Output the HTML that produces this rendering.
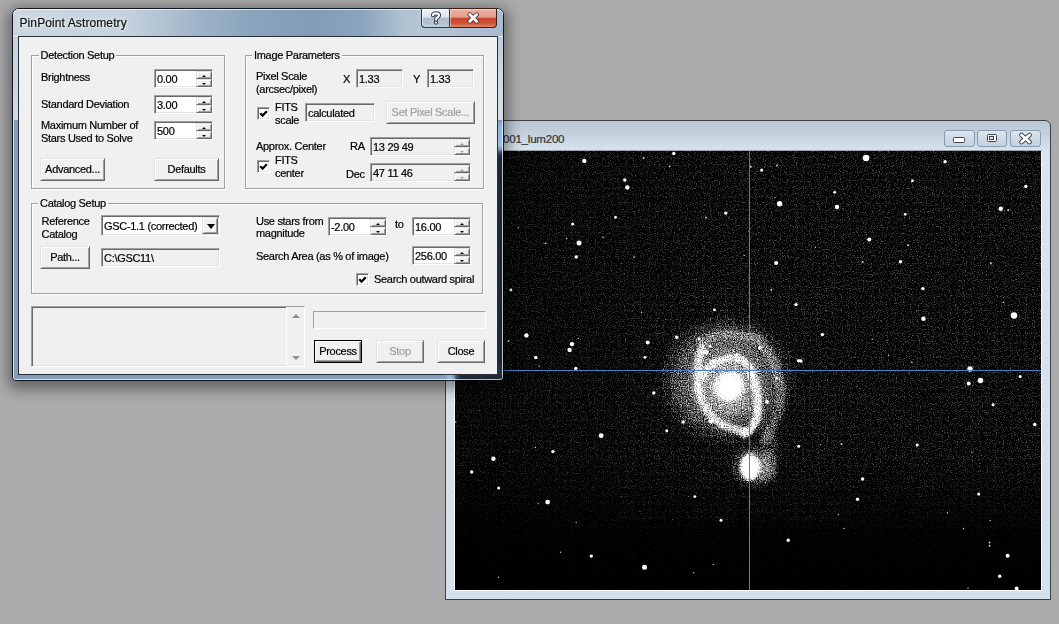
<!DOCTYPE html>
<html><head><meta charset="utf-8"><style>
html,body{margin:0;padding:0}
body{width:1059px;height:624px;position:relative;overflow:hidden;background:#ababab;font-family:"Liberation Sans",sans-serif;font-size:11px;color:#000;-webkit-text-stroke-width:0.2px}
.t{position:absolute;white-space:nowrap;line-height:13px;letter-spacing:-0.3px}
.sunk{position:absolute;box-sizing:border-box;border:1px solid;border-color:#a0a0a0 #fff #fff #a0a0a0;box-shadow:inset 1px 1px 0 #696969,inset -1px -1px 0 #e3e3e3;background:#fff}
.et{position:absolute;left:2px;top:2px;line-height:14px;white-space:nowrap;letter-spacing:-0.3px}
.sp{position:absolute;right:0;width:16px;box-sizing:border-box;border:1px solid;border-color:#e3e3e3 #696969 #696969 #e3e3e3;box-shadow:inset 1px 1px 0 #fff,inset -1px -1px 0 #a0a0a0;background:#f0f0f0}
.au,.ad{position:absolute;left:4px;width:0;height:0;border-style:solid;border-color:transparent}
.au{left:5px;border-width:0 2px 2px 2px}
.ad{left:5px;border-width:2px 2px 0 2px}
.dd{position:absolute;right:1px;top:1px;bottom:1px;width:16px;box-sizing:border-box;border:1px solid;border-color:#e3e3e3 #696969 #696969 #e3e3e3;box-shadow:inset 1px 1px 0 #fff,inset -1px -1px 0 #a0a0a0;background:#f0f0f0}
.btn{position:absolute;box-sizing:border-box;padding-bottom:2px;border:1px solid;border-color:#e3e3e3 #696969 #696969 #e3e3e3;box-shadow:inset 1px 1px 0 #fff,inset -1px -1px 0 #a0a0a0;background:#f0f0f0;display:flex;align-items:center;justify-content:center;letter-spacing:-0.3px;white-space:nowrap}
.btn.def{outline:1px solid #000;outline-offset:-1px;border-color:#000;box-shadow:inset 1px 1px 0 #fff,inset -1px -1px 0 #696969,inset -2px -2px 0 #a0a0a0}
.grp{position:absolute;box-sizing:border-box;border:1px solid #a0a0a0;box-shadow:1px 1px 0 #fff, inset 1px 1px 0 #fff}
.chk{position:absolute;width:13px;height:13px;box-sizing:border-box;border:1px solid;border-color:#a0a0a0 #fff #fff #a0a0a0;box-shadow:inset 1px 1px 0 #696969,inset -1px -1px 0 #e3e3e3;background:#fff}
.cap{position:absolute;box-sizing:border-box;border:1px solid #8a9bb0;border-radius:3px;background:linear-gradient(#dfe7f0,#cdd9e6 50%,#c3d1e0)}
</style></head>
<body>

<div id="iw" style="position:absolute;left:445px;top:120px;width:606px;height:480px;box-sizing:border-box;border:1px solid #3c3f44;border-radius:6px 6px 0 0;background:linear-gradient(#bac7d4,#c3cfdb 12px,#d6e2ed 29px,#d8e4ef 40px,#d3e0ed);"></div>
<div style="position:absolute;left:454px;top:151px;width:588px;height:440px;background:#fff"></div>
<div style="position:absolute;left:454px;top:150px;width:588px;height:1px;background:#9aa3ad"></div>
<div class="t" style="left:503px;top:133px;font-size:11.5px;color:#333;letter-spacing:-0.2px">001_lum200</div>
<div class="cap" style="left:944px;top:130px;width:31px;height:17px"></div><div class="cap" style="left:977px;top:130px;width:30px;height:17px"></div><div class="cap" style="left:1010px;top:130px;width:31px;height:17px"></div>
<div style="position:absolute;left:953px;top:137px;width:10px;height:4px;border:1px solid #3c4148;background:#fff;border-radius:1.5px"></div>
<div style="position:absolute;left:986.5px;top:133.5px;width:8px;height:6.5px;border:1.5px solid #3c4148;background:#fff;border-radius:1.5px"><div style="position:absolute;left:1.5px;top:1.2px;width:3px;height:2px;border:1px solid #3c4148;background:#dfe6ee"></div></div>
<svg style="position:absolute;left:1018px;top:132px" width="15" height="13"><path d="M3.5 3 L11.5 10 M11.5 3 L3.5 10" stroke="#3c4148" stroke-width="4.6" stroke-linecap="round"/><path d="M3.5 3 L11.5 10 M11.5 3 L3.5 10" stroke="#fff" stroke-width="2.8" stroke-linecap="round"/></svg>

<svg style="position:absolute;left:455px;top:151px" width="586" height="439" viewBox="455 151 586 439">
<defs>
<radialGradient id="halo" cx="0.5" cy="0.5" r="0.5">
<stop offset="0" stop-color="#fff" stop-opacity="0.58"/>
<stop offset="0.45" stop-color="#fff" stop-opacity="0.52"/>
<stop offset="0.7" stop-color="#fff" stop-opacity="0.4"/>
<stop offset="0.88" stop-color="#fff" stop-opacity="0.2"/>
<stop offset="1" stop-color="#fff" stop-opacity="0"/>
</radialGradient>
<radialGradient id="chalo" cx="0.5" cy="0.5" r="0.5">
<stop offset="0" stop-color="#fff" stop-opacity="0.8"/>
<stop offset="0.55" stop-color="#fff" stop-opacity="0.42"/>
<stop offset="1" stop-color="#fff" stop-opacity="0"/>
</radialGradient>
<linearGradient id="fade" x1="0" y1="0" x2="0" y2="1">
<stop offset="0" stop-color="#000" stop-opacity="0"/>
<stop offset="0.7" stop-color="#000" stop-opacity="0"/>
<stop offset="0.88" stop-color="#000" stop-opacity="0.8"/>
<stop offset="1" stop-color="#000" stop-opacity="0.95"/>
</linearGradient>
<linearGradient id="fadeh" x1="0" y1="0" x2="1" y2="0">
<stop offset="0" stop-color="#000" stop-opacity="0.4"/>
<stop offset="0.5" stop-color="#000" stop-opacity="0"/>
</linearGradient>
<linearGradient id="fieldv" x1="0" y1="0" x2="0" y2="1">
<stop offset="0" stop-color="#fff" stop-opacity="0.03"/>
<stop offset="0.6" stop-color="#fff" stop-opacity="0.03"/>
<stop offset="1" stop-color="#fff" stop-opacity="0"/>
</linearGradient>
<filter id="b1" x="-50%" y="-50%" width="200%" height="200%"><feGaussianBlur stdDeviation="1.5"/></filter>
<filter id="b3" x="-50%" y="-50%" width="200%" height="200%"><feGaussianBlur stdDeviation="1.8"/></filter>
<filter id="b6" x="-50%" y="-50%" width="200%" height="200%"><feGaussianBlur stdDeviation="6"/></filter>
<filter id="sb" x="455" y="151" width="586" height="439" filterUnits="userSpaceOnUse"><feGaussianBlur stdDeviation="0.5"/></filter>
<filter id="grain" x="455" y="151" width="586" height="439" filterUnits="userSpaceOnUse">
<feTurbulence type="fractalNoise" baseFrequency="0.87" numOctaves="2" seed="11" result="t"/>
<feColorMatrix in="t" type="matrix" values="0 0 0 0 1  0 0 0 0 1  0 0 0 0 1  1 0 0 0 0" result="n"/>
<feComposite in="SourceGraphic" in2="n" operator="arithmetic" k1="0" k2="1.3" k3="1.05" k4="-0.56"/>
<feGaussianBlur stdDeviation="0.65"/>
</filter>
<filter id="ggrain" x="620" y="290" width="220" height="230" filterUnits="userSpaceOnUse">
<feTurbulence type="fractalNoise" baseFrequency="0.87" numOctaves="2" seed="23" result="t"/>
<feColorMatrix in="t" type="matrix" values="0 0 0 0 1  0 0 0 0 1  0 0 0 0 1  1 0 0 0 0" result="n"/>
<feComposite in="SourceGraphic" in2="n" operator="arithmetic" k1="0" k2="1.45" k3="1.8" k4="-1.25"/>
<feGaussianBlur stdDeviation="0.4"/>
</filter>
</defs>
<rect x="455" y="151" width="586" height="439" fill="#000"/>
<g filter="url(#grain)">
<rect x="455" y="151" width="586" height="439" fill="url(#fieldv)"/>
</g>
<rect x="455" y="151" width="586" height="439" fill="url(#fade)"/>
<rect x="455" y="151" width="586" height="439" fill="url(#fadeh)"/>
<g filter="url(#ggrain)">
<ellipse cx="726" cy="380" rx="72" ry="70" fill="url(#halo)"/>
<path d="M764 428 C 776 442, 776 462, 766 482" stroke="#fff" stroke-width="18" opacity="0.35" fill="none" filter="url(#b6)"/>
<circle cx="729" cy="387" r="28" fill="#fff" opacity="0.3" filter="url(#b6)"/>
<g filter="url(#b3)" fill="none" stroke="#fff" stroke-linecap="round">
<path d="M703 378 C 706 366, 720 357, 735 358 C 745 359, 750 366, 752 374" stroke-width="7" opacity="0.8"/>
<path d="M752 374 C 758 390, 760 408, 756 420 C 753 428, 750 432, 744 434" stroke-width="8" opacity="0.85"/>
<path d="M698 386 C 700 402, 708 416, 722 424 C 730 428, 736 430, 742 431" stroke-width="8" opacity="0.7"/>
<path d="M702 348 C 698 360, 697 375, 698 388" stroke-width="8" opacity="0.75"/>
<path d="M703 342 C 712 334, 730 331, 748 338" stroke-width="9" opacity="0.25"/>
<path d="M752 335 C 768 345, 778 365, 781 390 C 782 408, 776 425, 765 440" stroke-width="10" opacity="0.28"/>
</g>
<g fill="#fff" filter="url(#sb)">
<circle cx="706" cy="352" r="2.5"/><circle cx="712" cy="362" r="2"/><circle cx="700" cy="372" r="2.5"/>
<circle cx="705" cy="372" r="2.5"/><circle cx="760" cy="348" r="2"/><circle cx="767" cy="402" r="2"/><circle cx="757" cy="410" r="3"/>
<circle cx="711" cy="421" r="2.5"/><circle cx="722" cy="426" r="2"/><circle cx="745" cy="430" r="2.5"/>
</g>
<circle cx="729" cy="387" r="16" fill="#fff" opacity="0.45" filter="url(#b3)"/>
<circle cx="729" cy="386" r="14" fill="#fff" filter="url(#b1)"/>
<ellipse cx="753" cy="466" rx="27" ry="26" fill="url(#chalo)"/>
<ellipse cx="750" cy="467" rx="10" ry="13" fill="#fff" filter="url(#b1)"/>
</g>
<circle cx="729.5" cy="387" r="11" fill="#fff" filter="url(#b1)"/>
<ellipse cx="750" cy="468" rx="7.5" ry="11" fill="#fff" filter="url(#b1)"/>
<g fill="#fff" filter="url(#sb)">
<circle cx="584.3" cy="160.9" r="2.2"/>
<circle cx="624.8" cy="180.0" r="1.7"/>
<circle cx="627.3" cy="187.4" r="2.2"/>
<circle cx="615.5" cy="217.3" r="1.4"/>
<circle cx="572.6" cy="224.0" r="1.5"/>
<circle cx="579.0" cy="243.0" r="2.5"/>
<circle cx="576.2" cy="257.0" r="1.7"/>
<circle cx="566.6" cy="238.5" r="0.8" opacity="0.8"/>
<circle cx="545.5" cy="243.4" r="0.8" opacity="0.8"/>
<circle cx="603.0" cy="237.3" r="0.8" opacity="0.8"/>
<circle cx="643.7" cy="158.0" r="0.9" opacity="0.8"/>
<circle cx="634.0" cy="257.2" r="0.8" opacity="0.8"/>
<circle cx="518.5" cy="227.6" r="0.7" opacity="0.8"/>
<circle cx="673.8" cy="153.5" r="1.7"/>
<circle cx="669.4" cy="166.4" r="0.8" opacity="0.8"/>
<circle cx="725.8" cy="213.1" r="1.7"/>
<circle cx="706.0" cy="217.5" r="1.0" opacity="0.8"/>
<circle cx="750.8" cy="166.7" r="1.0" opacity="0.8"/>
<circle cx="761.6" cy="170.0" r="1.5"/>
<circle cx="777.0" cy="165.5" r="0.9" opacity="0.8"/>
<circle cx="779.6" cy="203.8" r="2.7"/>
<circle cx="775.0" cy="197.6" r="0.7" opacity="0.8"/>
<circle cx="744.3" cy="255.4" r="0.7" opacity="0.8"/>
<circle cx="866.1" cy="157.9" r="3.2"/>
<circle cx="945.1" cy="161.8" r="1.7"/>
<circle cx="912.5" cy="180.8" r="1.4"/>
<circle cx="834.7" cy="192.3" r="1.4"/>
<circle cx="837.0" cy="207.0" r="2.2"/>
<circle cx="905.2" cy="214.3" r="1.4"/>
<circle cx="869.3" cy="239.4" r="2.0"/>
<circle cx="908.0" cy="245.2" r="1.0" opacity="0.8"/>
<circle cx="815.3" cy="247.3" r="0.7" opacity="0.8"/>
<circle cx="1025.8" cy="186.5" r="1.7"/>
<circle cx="1000.8" cy="208.7" r="2.2"/>
<circle cx="1008.2" cy="210.0" r="1.0" opacity="0.8"/>
<circle cx="510.9" cy="290.0" r="1.4"/>
<circle cx="526.4" cy="335.4" r="2.2"/>
<circle cx="508.5" cy="341.0" r="1.0" opacity="0.8"/>
<circle cx="571.9" cy="344.1" r="2.2"/>
<circle cx="569.6" cy="349.9" r="2.2"/>
<circle cx="578.4" cy="338.4" r="0.7" opacity="0.8"/>
<circle cx="535.8" cy="357.5" r="1.7"/>
<circle cx="539.1" cy="366.3" r="0.7" opacity="0.8"/>
<circle cx="575.8" cy="368.4" r="1.7"/>
<circle cx="641.5" cy="312.4" r="0.7" opacity="0.8"/>
<circle cx="647.7" cy="342.5" r="2.0"/>
<circle cx="645.0" cy="357.3" r="1.4"/>
<circle cx="862.6" cy="262.1" r="1.0" opacity="0.8"/>
<circle cx="900.5" cy="261.8" r="1.7"/>
<circle cx="922.9" cy="288.6" r="1.7"/>
<circle cx="923.4" cy="318.7" r="2.2"/>
<circle cx="822.4" cy="334.6" r="1.7"/>
<circle cx="872.3" cy="339.3" r="0.7" opacity="0.8"/>
<circle cx="800.9" cy="361.0" r="1.7"/>
<circle cx="911.6" cy="362.2" r="0.7" opacity="0.8"/>
<circle cx="888.5" cy="355.2" r="0.7" opacity="0.8"/>
<circle cx="990.8" cy="263.2" r="1.0" opacity="0.8"/>
<circle cx="1014.0" cy="315.5" r="3.2"/>
<circle cx="1003.5" cy="302.3" r="0.7" opacity="0.8"/>
<circle cx="970.0" cy="369.0" r="2.7"/>
<circle cx="776.2" cy="263.0" r="2.0"/>
<circle cx="771.4" cy="289.4" r="0.7" opacity="0.8"/>
<circle cx="796.0" cy="304.6" r="1.7"/>
<circle cx="714.4" cy="309.7" r="1.5"/>
<circle cx="771.3" cy="290.3" r="0.7" opacity="0.8"/>
<circle cx="676.7" cy="337.2" r="1.7"/>
<circle cx="699.0" cy="338.8" r="1.5"/>
<circle cx="710.1" cy="346.3" r="1.5"/>
<circle cx="736.9" cy="354.3" r="1.4"/>
<circle cx="798.6" cy="360.8" r="1.7"/>
<circle cx="601.1" cy="435.7" r="2.4"/>
<circle cx="552.9" cy="451.6" r="1.7"/>
<circle cx="493.4" cy="458.8" r="2.2"/>
<circle cx="471.7" cy="472.0" r="1.7"/>
<circle cx="535.4" cy="447.4" r="0.7" opacity="0.8"/>
<circle cx="455.7" cy="422.0" r="0.8" opacity="0.8"/>
<circle cx="498.7" cy="488.1" r="1.5"/>
<circle cx="547.6" cy="502.1" r="2.4"/>
<circle cx="538.2" cy="503.6" r="0.7" opacity="0.8"/>
<circle cx="591.3" cy="556.1" r="1.7"/>
<circle cx="644.5" cy="567.3" r="2.5"/>
<circle cx="576.2" cy="522.5" r="0.7" opacity="0.8"/>
<circle cx="560.5" cy="552.3" r="0.7" opacity="0.8"/>
<circle cx="498.5" cy="577.3" r="0.7" opacity="0.8"/>
<circle cx="917.2" cy="444.9" r="1.5"/>
<circle cx="820.8" cy="444.6" r="0.7" opacity="0.8"/>
<circle cx="841.4" cy="444.0" r="1.0" opacity="0.8"/>
<circle cx="862.6" cy="479.0" r="1.7"/>
<circle cx="980.5" cy="380.5" r="2.7"/>
<circle cx="968.7" cy="383.5" r="2.0"/>
<circle cx="1020.2" cy="376.4" r="1.5"/>
<circle cx="993.1" cy="404.7" r="1.5"/>
<circle cx="1034.8" cy="424.5" r="1.7"/>
<circle cx="972.0" cy="452.6" r="0.7" opacity="0.8"/>
<circle cx="694.8" cy="496.6" r="1.4"/>
<circle cx="721.0" cy="520.2" r="1.5"/>
<circle cx="788.2" cy="540.3" r="1.7"/>
<circle cx="713.2" cy="564.4" r="0.7" opacity="0.8"/>
<circle cx="693.7" cy="572.7" r="0.7" opacity="0.8"/>
<circle cx="857.5" cy="499.3" r="1.7"/>
<circle cx="838.3" cy="514.5" r="0.7" opacity="0.8"/>
<circle cx="844.2" cy="528.5" r="0.7" opacity="0.8"/>
<circle cx="947.4" cy="512.8" r="0.7" opacity="0.8"/>
<circle cx="978.7" cy="494.0" r="1.5"/>
<circle cx="990.1" cy="520.5" r="0.7" opacity="0.8"/>
<circle cx="963.5" cy="528.5" r="0.7" opacity="0.8"/>
<circle cx="989.5" cy="542.5" r="1.0" opacity="0.8"/>
<circle cx="989.5" cy="545.8" r="1.0" opacity="0.8"/>
<circle cx="1007.6" cy="555.8" r="2.0"/>
<circle cx="999.7" cy="576.2" r="1.7"/>
<circle cx="1016.6" cy="588.6" r="2.0"/>
<circle cx="968.0" cy="588.2" r="0.7" opacity="0.8"/>
<circle cx="653.8" cy="393.0" r="1.7"/>
<circle cx="683.2" cy="422.0" r="1.7"/>
<circle cx="666.8" cy="430.8" r="1.5"/>
<circle cx="798.7" cy="446.2" r="1.5"/>
<circle cx="776.7" cy="378.0" r="1.5"/>
</g>
<rect x="749" y="151" width="1" height="439" fill="#4a80c8"/>
<rect x="455" y="370" width="586" height="1" fill="#4a80c8"/>
</svg>

<div style="position:absolute;left:12px;top:8px;width:492px;height:373px;border-radius:7px 7px 4px 4px;box-shadow:0 4px 14px 4px rgba(0,0,0,0.42)"></div>
<div style="position:absolute;left:12px;top:8px;width:492px;height:373px;border-radius:7px 7px 4px 4px;backdrop-filter:blur(3px)"></div>
<div id="dlg" style="position:absolute;left:12px;top:8px;width:492px;height:373px;box-sizing:border-box;border:1px solid #1c2128;border-radius:7px 7px 4px 4px;background:rgb(178,214,250);mix-blend-mode:multiply"></div>
<div style="position:absolute;left:13px;top:9px;width:490px;height:371px;border-radius:6px 6px 3px 3px;background:rgb(24,32,48);mix-blend-mode:screen"></div>
<div style="position:absolute;left:13px;top:9px;width:490px;height:371px;box-sizing:border-box;border:1px solid rgba(255,255,255,0.7);border-radius:6px 6px 3px 3px"></div>
<div style="position:absolute;left:13px;top:30px;width:5px;height:90px;background:linear-gradient(#c4d1dd,#cbd6e1 60%,#d0dae4)"></div>
<div style="position:absolute;left:498px;top:30px;width:5px;height:90px;background:linear-gradient(#b8c8d8,#cdd8e2 50%,#d6dfe8)"></div>
<div style="position:absolute;left:13px;top:9px;width:490px;height:28px;border-radius:6px 6px 0 0;background:linear-gradient(90deg,#cbd6e1 0px,#c6d2de 110px,#b2c3d3 150px,#9cb2c7 190px,#8aa4bd 240px,#819cb7 300px,#8ba4bd 350px,#afc1d2 390px,#b6c6d6 410px,#a9bcd0 470px,#aabdd0 490px);box-shadow:inset 0 1px 0 rgba(255,255,255,0.7), inset 0 -1px 0 rgba(235,242,248,0.8)"></div>
<div class="t" style="left:19.5px;top:17.4px;font-size:12px;letter-spacing:0.1px;color:#101010;text-shadow:0 0 7px rgba(255,255,255,0.9),0 0 3px rgba(255,255,255,0.8)">PinPoint Astrometry</div>
<div style="position:absolute;left:421px;top:8px;width:28px;height:20px;box-sizing:border-box;border:1px solid #2f3946;border-right:none;border-radius:0 0 0 4px;background:linear-gradient(#eef2f6,#dbe3ea 45%,#aebdcc 52%,#b3c2d1 80%,#c5d2de);box-shadow:inset 1px 1px 0 rgba(255,255,255,0.6)"></div>
<div style="position:absolute;left:449px;top:8px;width:48px;height:20px;box-sizing:border-box;border:1px solid #3a1f1a;border-left:1px solid #2f3946;border-radius:0 0 4px 0;background:linear-gradient(#eab4a6,#e39d8b 45%,#c9482d 52%,#cf5236 80%,#e08a70);box-shadow:inset 1px 1px 0 rgba(255,230,220,0.55)"></div>
<svg style="position:absolute;left:429px;top:10px" width="14" height="16"><path d="M4 5.2 C4 2.8,10 2.8,10 5.2 C10 7.2,7 7.4,7 9.6" stroke="#2f3946" stroke-width="4.2" fill="none" stroke-linecap="round"/><circle cx="7" cy="12.6" r="2.1" fill="#2f3946"/><path d="M4 5.2 C4 2.8,10 2.8,10 5.2 C10 7.2,7 7.4,7 9.6" stroke="#fff" stroke-width="2.2" fill="none" stroke-linecap="round"/><circle cx="7" cy="12.6" r="1.1" fill="#fff"/></svg>
<svg style="position:absolute;left:466px;top:12px" width="15" height="12"><path d="M3.8 2.6 L10.6 9.2 M10.6 2.6 L3.8 9.2" stroke="#5a3a34" stroke-width="4.6" stroke-linecap="round"/><path d="M3.8 2.6 L10.6 9.2 M10.6 2.6 L3.8 9.2" stroke="#fff" stroke-width="2.8" stroke-linecap="round"/></svg>
<div style="position:absolute;left:18px;top:36px;width:480px;height:339px;box-sizing:border-box;border:1px solid #2a3038;background:#f0f0f0"></div>
<div class="grp" style="left:31px;top:55px;width:194px;height:134px;"></div><div class="t" style="left:38.5px;top:49px;padding:0 2px;background:#f0f0f0;letter-spacing:-0.3px">Detection Setup</div><div class="grp" style="left:245px;top:55px;width:239px;height:134px;"></div><div class="t" style="left:252px;top:49px;padding:0 2px;background:#f0f0f0;letter-spacing:-0.3px">Image Parameters</div><div class="grp" style="left:31px;top:202.5px;width:452px;height:91.0px;"></div><div class="t" style="left:38px;top:196.5px;padding:0 2px;background:#f0f0f0;letter-spacing:-0.3px">Catalog Setup</div><div class="t" style="left:41px;top:71.2px;">Brightness</div><div class="t" style="left:41px;top:97.7px;">Standard Deviation</div><div class="t" style="left:41px;top:118.7px;line-height:13px">Maximum Number of<br>Stars Used to Solve</div><div class="sunk" style="left:154px;top:69px;width:59px;height:19px;background:#fff"><div class="et" style="color:#000">0.00</div><div class="sp" style="top:1px;height:8px"><div class="au" style="border-bottom-color:#000;top:2.5px"></div></div><div class="sp" style="top:9px;height:8px"><div class="ad" style="border-top-color:#000;top:2.5px"></div></div></div><div class="sunk" style="left:154px;top:95px;width:59px;height:19px;background:#fff"><div class="et" style="color:#000">3.00</div><div class="sp" style="top:1px;height:8px"><div class="au" style="border-bottom-color:#000;top:2.5px"></div></div><div class="sp" style="top:9px;height:8px"><div class="ad" style="border-top-color:#000;top:2.5px"></div></div></div><div class="sunk" style="left:154px;top:121px;width:59px;height:19px;background:#fff"><div class="et" style="color:#000">500</div><div class="sp" style="top:1px;height:8px"><div class="au" style="border-bottom-color:#000;top:2.5px"></div></div><div class="sp" style="top:9px;height:8px"><div class="ad" style="border-top-color:#000;top:2.5px"></div></div></div><div class="btn" style="left:40px;top:158px;width:65px;height:23px;"><span style="color:#000">Advanced...</span></div><div class="btn" style="left:154px;top:158px;width:65px;height:23px;"><span style="color:#000">Defaults</span></div><div class="t" style="left:256px;top:70.2px;">Pixel Scale<br>(arcsec/pixel)</div><div class="t" style="left:343px;top:72.7px;">X</div><div class="sunk" style="left:356px;top:69px;width:47px;height:19px;background:#f0f0f0"><div class="et">1.33</div></div><div class="t" style="left:413px;top:72.7px;">Y</div><div class="sunk" style="left:427px;top:69px;width:47px;height:19px;background:#f0f0f0"><div class="et">1.33</div></div><div class="chk" style="left:257px;top:107px"><svg width="9" height="9" style="position:absolute;left:1px;top:1px"><path d="M1.2 4.2 L3.6 6.6 L7.8 2.2" stroke="#000" stroke-width="2.2" fill="none"/></svg></div><div class="t" style="left:275px;top:101.2px;line-height:12.5px">FITS<br>scale</div><div class="sunk" style="left:305px;top:103px;width:70px;height:19px;background:#f0f0f0"><div class="et" style="top:2px">calculated</div></div><div class="btn" style="left:386px;top:101px;width:89px;height:23px;"><span style="color:#a0a0a0">Set Pixel Scale...</span></div><div class="t" style="left:256px;top:139.7px;">Approx. Center</div><div class="t" style="left:350px;top:139.7px;">RA</div><div class="sunk" style="left:370px;top:137px;width:101px;height:19px;background:#f0f0f0"><div class="et" style="color:#000">13 29 49</div><div class="sp" style="top:1px;height:8px"><div class="au" style="border-bottom-color:#a0a0a0;top:2.5px"></div></div><div class="sp" style="top:9px;height:8px"><div class="ad" style="border-top-color:#a0a0a0;top:2.5px"></div></div></div><div class="chk" style="left:257px;top:160px"><svg width="9" height="9" style="position:absolute;left:1px;top:1px"><path d="M1.2 4.2 L3.6 6.6 L7.8 2.2" stroke="#000" stroke-width="2.2" fill="none"/></svg></div><div class="t" style="left:275px;top:153.7px;line-height:13px">FITS<br>center</div><div class="t" style="left:346px;top:168.2px;">Dec</div><div class="sunk" style="left:370px;top:163px;width:101px;height:19px;background:#f0f0f0"><div class="et" style="color:#000">47 11 46</div><div class="sp" style="top:1px;height:8px"><div class="au" style="border-bottom-color:#a0a0a0;top:2.5px"></div></div><div class="sp" style="top:9px;height:8px"><div class="ad" style="border-top-color:#a0a0a0;top:2.5px"></div></div></div><div class="t" style="left:41.5px;top:214.7px;">Reference<br>Catalog</div><div class="sunk" style="left:101px;top:215px;width:119px;height:21px;"><div class="et" style="top:3px">GSC-1.1 (corrected)</div><div class="dd"><div class="ad" style="border-top-color:#000;border-width:5px 4px 0 4px;left:4px;top:6px"></div></div></div><div class="btn" style="left:40px;top:246px;width:50px;height:23px;"><span style="color:#000">Path...</span></div><div class="sunk" style="left:101px;top:248px;width:119px;height:19px;background:#f0f0f0"><div class="et" style="top:2px">C:\GSC11\</div></div><div class="t" style="left:256px;top:214.7px;line-height:12.5px">Use stars from<br>magnitude</div><div class="sunk" style="left:328px;top:217px;width:59px;height:19px;background:#fff"><div class="et" style="color:#000">-2.00</div><div class="sp" style="top:1px;height:8px"><div class="au" style="border-bottom-color:#000;top:2.5px"></div></div><div class="sp" style="top:9px;height:8px"><div class="ad" style="border-top-color:#000;top:2.5px"></div></div></div><div class="t" style="left:395px;top:217.7px;">to</div><div class="sunk" style="left:412px;top:217px;width:59px;height:19px;background:#fff"><div class="et" style="color:#000">16.00</div><div class="sp" style="top:1px;height:8px"><div class="au" style="border-bottom-color:#000;top:2.5px"></div></div><div class="sp" style="top:9px;height:8px"><div class="ad" style="border-top-color:#000;top:2.5px"></div></div></div><div class="t" style="left:256px;top:249.7px;">Search Area (as % of image)</div><div class="sunk" style="left:412px;top:246px;width:59px;height:19px;background:#fff"><div class="et" style="color:#000">256.00</div><div class="sp" style="top:1px;height:8px"><div class="au" style="border-bottom-color:#000;top:2.5px"></div></div><div class="sp" style="top:9px;height:8px"><div class="ad" style="border-top-color:#000;top:2.5px"></div></div></div><div class="chk" style="left:356px;top:273px"><svg width="9" height="9" style="position:absolute;left:1px;top:1px"><path d="M1.2 4.2 L3.6 6.6 L7.8 2.2" stroke="#000" stroke-width="2.2" fill="none"/></svg></div><div class="t" style="left:374px;top:272.7px;">Search outward spiral</div><div class="sunk" style="left:31px;top:306px;width:274px;height:61px;background:#f0f0f0"><div style="position:absolute;right:0;top:0;bottom:0;width:17px;background:#f0f0f0;border-left:1px solid #fff"><div class="au" style="border-bottom-color:#909090;left:5px;top:7px;border-width:0 4px 4px 4px"></div><div class="ad" style="border-top-color:#909090;left:5px;top:auto;bottom:6px;border-width:4px 4px 0 4px"></div></div></div><div class="sunk" style="left:313px;top:311px;width:173px;height:18px;background:#f0f0f0;box-shadow:none"></div><div class="btn def" style="left:314px;top:340px;width:48px;height:23px;"><span style="color:#000">Process</span></div><div class="btn" style="left:376px;top:340px;width:48px;height:23px;"><span style="color:#a0a0a0">Stop</span></div><div class="btn" style="left:437px;top:340px;width:48px;height:23px;"><span style="color:#000">Close</span></div>
</body></html>
